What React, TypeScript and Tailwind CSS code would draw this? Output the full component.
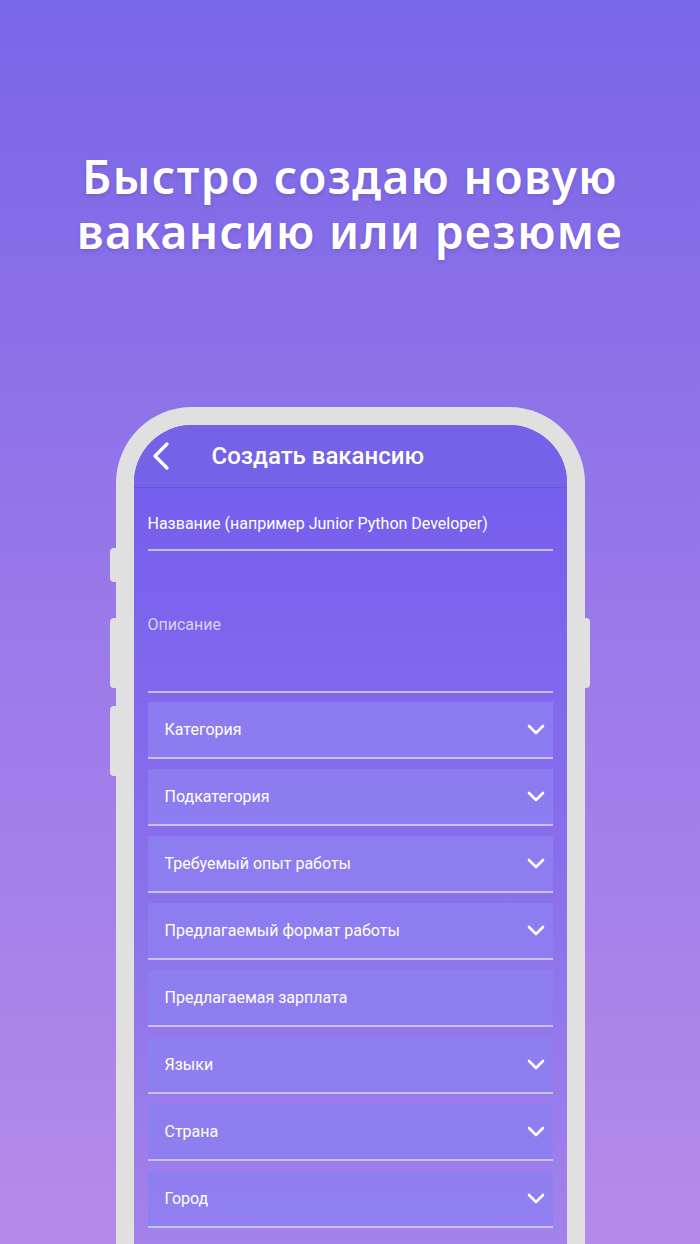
import React from 'react';

const selects = [
  { label: 'Категория', chevron: true },
  { label: 'Подкатегория', chevron: true },
  { label: 'Требуемый опыт работы', chevron: true },
  { label: 'Предлагаемый формат работы', chevron: true },
  { label: 'Предлагаемая зарплата', chevron: false },
  { label: 'Языки', chevron: true },
  { label: 'Страна', chevron: true },
  { label: 'Город', chevron: true },
];

const Chevron = () => (
  <svg width="18" height="11" viewBox="0 0 18 11" fill="none">
    <path d="M2 2l7 7 7-7" stroke="white" strokeWidth="2.6" strokeLinecap="round" strokeLinejoin="round" />
  </svg>
);

export default function App() {
  return (
    <div
      className="w-[700px] h-[1244px] overflow-hidden bg-gradient-to-b from-[#7965e8] via-[#9a79e9] to-[#b58aea]"
      style={{ fontFamily: 'Roboto, "Noto Sans", sans-serif' }}
    >
      {/* Headline */}
      <h1
        className="pt-[149px] flex flex-col items-center text-white text-[46px] leading-[55px] font-semibold tracking-[1.4px]"
        style={{ fontFamily: '"Noto Sans", "Open Sans", sans-serif', textShadow: '0 2px 4px rgba(0,0,0,0.12)' }}
      >
        <span className="block h-[55px]">Быстро создаю новую</span>
        <span className="block h-[55px]">вакансию или резюме</span>
      </h1>

      {/* Phone */}
      <div className="relative mx-auto mt-[148px] w-[469px]">
        {/* side buttons */}
        <div className="absolute left-[-6px] top-[141px] w-[6px] h-[34px] bg-[#e0e0e0] rounded-l-sm" />
        <div className="absolute left-[-6px] top-[211px] w-[6px] h-[70px] bg-[#e0e0e0] rounded-l-sm" />
        <div className="absolute left-[-6px] top-[299px] w-[6px] h-[70px] bg-[#e0e0e0] rounded-l-sm" />
        <div className="absolute right-[-5px] top-[211px] w-[5px] h-[70px] bg-[#e0e0e0] rounded-r-sm" />

        <div className="bg-[#e0e0e0] rounded-t-[76px] px-[18px] pt-[18px] h-[900px]">
          <div className="rounded-t-[58px] overflow-hidden h-full bg-gradient-to-b from-[#735bee] via-[#8a6fec] to-[#a785ea]">
            {/* Header */}
            <div className="h-[63px] bg-[#7563e7] border-b border-[#6656d6] flex items-center">
              <svg width="20" height="30" viewBox="0 0 20 30" fill="none" className="ml-[16px]">
                <path d="M17 3L5 15l12 12" stroke="white" strokeWidth="3.2" strokeLinecap="round" strokeLinejoin="round" />
              </svg>
              <span className="ml-[42px] text-white text-[24px] font-medium">Создать вакансию</span>
            </div>

            <div className="px-[14px]">
              {/* Title field */}
              <div className="pt-[26px] pb-[15px] border-b-2 border-[#c6bdf3]">
                <span className="text-white text-[16px] leading-[20px] block">
                  Название (например Junior Python Developer)
                </span>
              </div>

              {/* Description */}
              <div className="pt-[64px] pb-[56px] border-b-2 border-[#c6bdf3]">
                <span className="text-[#dad2f7] text-[16px] leading-[20px] block">Описание</span>
              </div>

              {/* Selects */}
              <div className="flex flex-col gap-[10px] pt-[9px]">
                {selects.map((s) => (
                  <div
                    key={s.label}
                    className="h-[57px] bg-[#8e7ef1]/90 border-b-2 border-[#c9c0f4] flex items-center justify-between pl-[17px] pr-[8px]"
                  >
                    <span className="text-white text-[16px]">{s.label}</span>
                    {s.chevron && <Chevron />}
                  </div>
                ))}
              </div>
            </div>
          </div>
        </div>
      </div>
    </div>
  );
}
